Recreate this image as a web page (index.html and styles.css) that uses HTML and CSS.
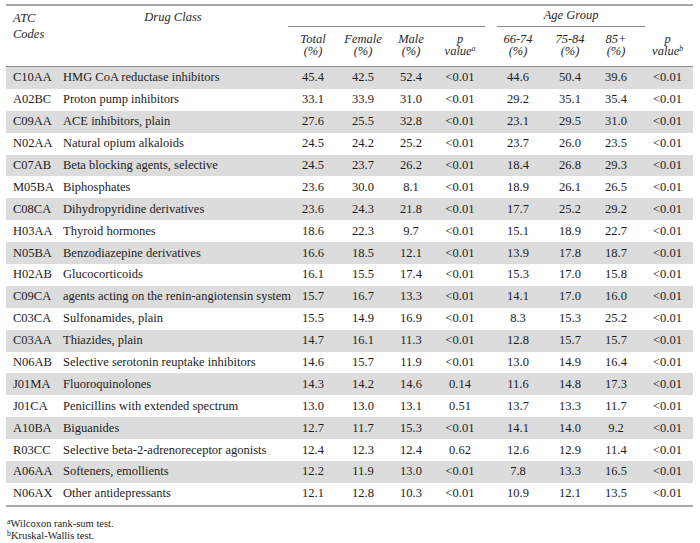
FILE: index.html
```html
<!DOCTYPE html>
<html lang="en">
<head>
<meta charset="utf-8">
<title>ATC drug classes by sex and age group</title>
<link rel="stylesheet" href="styles.css">
</head>
<body>
<div class="page">
<table class="atc">
  <colgroup>
    <col class="c-code"><col class="c-drug"><col class="c-total"><col class="c-female"><col class="c-male"><col class="c-pa"><col class="c-a1"><col class="c-a2"><col class="c-a3"><col class="c-pb">
  </colgroup>
  <thead>
    <tr class="h1">
      <th rowspan="2" class="left code">ATC<br>Codes</th>
      <th rowspan="2" class="drug">Drug Class</th>
      <th colspan="4" class="grp"><div class="rule rule-sex"></div></th>
      <th colspan="3" class="grp"><div class="grp-label">Age Group</div><div class="rule rule-age"></div></th>
      <th class="grp"></th>
    </tr>
    <tr class="h2">
      <th>Total<br>(%)</th>
      <th>Female<br>(%)</th>
      <th>Male<br>(%)</th>
      <th>p<br>value<sup>a</sup></th>
      <th>66-74<br>(%)</th>
      <th>75-84<br>(%)</th>
      <th>85+<br>(%)</th>
      <th>p<br>value<sup>b</sup></th>
    </tr>
  </thead>
  <tbody>
    <tr><td class="code">C10AA</td><td class="drug">HMG CoA reductase inhibitors</td><td>45.4</td><td>42.5</td><td>52.4</td><td>&lt;0.01</td><td>44.6</td><td>50.4</td><td>39.6</td><td>&lt;0.01</td></tr>
    <tr><td class="code">A02BC</td><td class="drug">Proton pump inhibitors</td><td>33.1</td><td>33.9</td><td>31.0</td><td>&lt;0.01</td><td>29.2</td><td>35.1</td><td>35.4</td><td>&lt;0.01</td></tr>
    <tr><td class="code">C09AA</td><td class="drug">ACE inhibitors, plain</td><td>27.6</td><td>25.5</td><td>32.8</td><td>&lt;0.01</td><td>23.1</td><td>29.5</td><td>31.0</td><td>&lt;0.01</td></tr>
    <tr><td class="code">N02AA</td><td class="drug">Natural opium alkaloids</td><td>24.5</td><td>24.2</td><td>25.2</td><td>&lt;0.01</td><td>23.7</td><td>26.0</td><td>23.5</td><td>&lt;0.01</td></tr>
    <tr><td class="code">C07AB</td><td class="drug">Beta blocking agents, selective</td><td>24.5</td><td>23.7</td><td>26.2</td><td>&lt;0.01</td><td>18.4</td><td>26.8</td><td>29.3</td><td>&lt;0.01</td></tr>
    <tr><td class="code">M05BA</td><td class="drug">Biphosphates</td><td>23.6</td><td>30.0</td><td>8.1</td><td>&lt;0.01</td><td>18.9</td><td>26.1</td><td>26.5</td><td>&lt;0.01</td></tr>
    <tr><td class="code">C08CA</td><td class="drug">Dihydropyridine derivatives</td><td>23.6</td><td>24.3</td><td>21.8</td><td>&lt;0.01</td><td>17.7</td><td>25.2</td><td>29.2</td><td>&lt;0.01</td></tr>
    <tr><td class="code">H03AA</td><td class="drug">Thyroid hormones</td><td>18.6</td><td>22.3</td><td>9.7</td><td>&lt;0.01</td><td>15.1</td><td>18.9</td><td>22.7</td><td>&lt;0.01</td></tr>
    <tr><td class="code">N05BA</td><td class="drug">Benzodiazepine derivatives</td><td>16.6</td><td>18.5</td><td>12.1</td><td>&lt;0.01</td><td>13.9</td><td>17.8</td><td>18.7</td><td>&lt;0.01</td></tr>
    <tr><td class="code">H02AB</td><td class="drug">Glucocorticoids</td><td>16.1</td><td>15.5</td><td>17.4</td><td>&lt;0.01</td><td>15.3</td><td>17.0</td><td>15.8</td><td>&lt;0.01</td></tr>
    <tr><td class="code">C09CA</td><td class="drug">agents acting on the renin-angiotensin system</td><td>15.7</td><td>16.7</td><td>13.3</td><td>&lt;0.01</td><td>14.1</td><td>17.0</td><td>16.0</td><td>&lt;0.01</td></tr>
    <tr><td class="code">C03CA</td><td class="drug">Sulfonamides, plain</td><td>15.5</td><td>14.9</td><td>16.9</td><td>&lt;0.01</td><td>8.3</td><td>15.3</td><td>25.2</td><td>&lt;0.01</td></tr>
    <tr><td class="code">C03AA</td><td class="drug">Thiazides, plain</td><td>14.7</td><td>16.1</td><td>11.3</td><td>&lt;0.01</td><td>12.8</td><td>15.7</td><td>15.7</td><td>&lt;0.01</td></tr>
    <tr><td class="code">N06AB</td><td class="drug">Selective serotonin reuptake inhibitors</td><td>14.6</td><td>15.7</td><td>11.9</td><td>&lt;0.01</td><td>13.0</td><td>14.9</td><td>16.4</td><td>&lt;0.01</td></tr>
    <tr><td class="code">J01MA</td><td class="drug">Fluoroquinolones</td><td>14.3</td><td>14.2</td><td>14.6</td><td>0.14</td><td>11.6</td><td>14.8</td><td>17.3</td><td>&lt;0.01</td></tr>
    <tr><td class="code">J01CA</td><td class="drug">Penicillins with extended spectrum</td><td>13.0</td><td>13.0</td><td>13.1</td><td>0.51</td><td>13.7</td><td>13.3</td><td>11.7</td><td>&lt;0.01</td></tr>
    <tr><td class="code">A10BA</td><td class="drug">Biguanides</td><td>12.7</td><td>11.7</td><td>15.3</td><td>&lt;0.01</td><td>14.1</td><td>14.0</td><td>9.2</td><td>&lt;0.01</td></tr>
    <tr><td class="code">R03CC</td><td class="drug">Selective beta-2-adrenoreceptor agonists</td><td>12.4</td><td>12.3</td><td>12.4</td><td>0.62</td><td>12.6</td><td>12.9</td><td>11.4</td><td>&lt;0.01</td></tr>
    <tr><td class="code">A06AA</td><td class="drug">Softeners, emollients</td><td>12.2</td><td>11.9</td><td>13.0</td><td>&lt;0.01</td><td>7.8</td><td>13.3</td><td>16.5</td><td>&lt;0.01</td></tr>
    <tr><td class="code">N06AX</td><td class="drug">Other antidepressants</td><td>12.1</td><td>12.8</td><td>10.3</td><td>&lt;0.01</td><td>10.9</td><td>12.1</td><td>13.5</td><td>&lt;0.01</td></tr>
  </tbody>
</table>
<div class="notes">
  <p><sup>a</sup>Wilcoxon rank-sum test.</p>
  <p><sup>b</sup>Kruskal-Wallis test.</p>
</div>
</div>
</body>
</html>
```

FILE: styles.css
```css
html, body {
  margin: 0;
  padding: 0;
  background: #ffffff;
}

body {
  font-family: "Liberation Serif", "Times New Roman", serif;
  color: #1c1c1c;
}

.page {
  padding: 4px 7px 0 6px;
}

.atc {
  width: 687px;
  border-collapse: collapse;
  table-layout: fixed;
  font-size: 12.5px;
  border-top: 2px solid #a8a8a8;
  border-bottom: 2px solid #a8a8a8;
}

.c-code { width: 52px; }
.c-drug { width: 230px; }
.c-total { width: 50px; }
.c-female { width: 50px; }
.c-male { width: 46px; }
.c-pa { width: 52px; }
.c-a1 { width: 64px; }
.c-a2 { width: 40px; }
.c-a3 { width: 52px; }
.c-pb { width: 51px; }

thead th {
  font-weight: normal;
  font-style: italic;
  color: #2a2a2a;
  padding: 0;
  text-align: center;
}

thead tr.h2 {
  border-bottom: 1px solid #8c8c8c;
}

thead tr.h1 th {
  height: 22px;
  vertical-align: top;
}

thead th.code {
  text-align: left;
  padding: 4px 0 0 7px;
  line-height: 16px;
  vertical-align: top;
}

thead th.drug {
  padding: 3px 0 0 0;
  line-height: 16px;
  vertical-align: top;
}

thead th.grp {
  padding: 0;
}

.grp-label {
  height: 20px;
  line-height: 18px;
  padding-left: 14px;
}

.rule {
  border-bottom: 1px solid #8c8c8c;
}

.rule-sex {
  height: 20px;
  margin: 0 1px 0 0;
}

.rule-age {
  margin: 0 -3px 0 11px;
}

thead tr.h2 th {
  height: 34px;
  line-height: 12.5px;
  padding: 0 0 4px 0;
  vertical-align: middle;
}

sup {
  font-size: 0.6em;
  line-height: 0;
  vertical-align: 0.55em;
}

tbody td {
  height: 21.9px;
  padding: 0;
  text-align: center;
  vertical-align: middle;
  white-space: nowrap;
}

tbody tr:nth-child(odd) td {
  background: #dcdcdc;
}

tbody td.code {
  text-align: left;
  padding-left: 7px;
}

tbody td.drug {
  text-align: left;
  padding-left: 5px;
}

.notes {
  padding: 11px 0 0 1px;
  font-size: 10.5px;
  line-height: 12px;
}

.notes p {
  margin: 0;
}

.notes sup {
  font-size: 0.75em;
  vertical-align: 0.4em;
}
```
